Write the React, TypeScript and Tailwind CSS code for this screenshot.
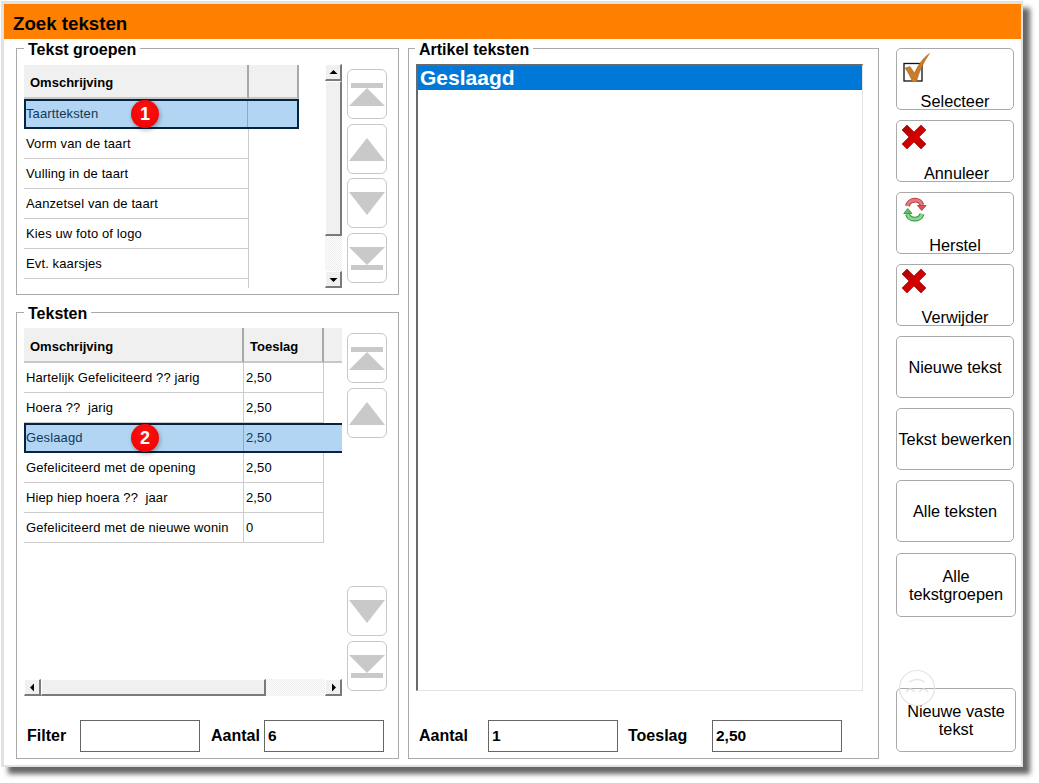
import React from "react";

const groupRows = ["Vorm van de taart", "Vulling in de taart", "Aanzetsel van de taart", "Kies uw foto of logo", "Evt. kaarsjes"];
const textRows: [string, string, boolean?][] = [
  ["Hartelijk Gefeliciteerd ?? jarig", "2,50"],
  ["Hoera ??  jarig", "2,50"],
  ["Geslaagd", "2,50", true],
  ["Gefeliciteerd met de opening", "2,50"],
  ["Hiep hiep hoera ??  jaar", "2,50"],
  ["Gefeliciteerd met de nieuwe wonin", "0"],
];

function Badge({ n }: { n: number }) {
  return (
    <div className="absolute left-[105px] top-[-1px] flex h-[28px] w-[28px] items-center justify-center rounded-full bg-[radial-gradient(circle_at_50%_35%,#ff1010,#ee0000)] text-[18px] font-bold tracking-normal text-white shadow-[1px_2px_4px_rgba(0,0,0,0.3)]">
      {n}
    </div>
  );
}

function Nav({ kind, className = "" }: { kind: "first" | "up" | "down" | "last"; className?: string }) {
  return (
    <div className={`h-[50px] w-[40px] rounded-[6px] border border-[#c8c8c8] bg-white ${className}`}>
      <svg width="38" height="48" viewBox="1 1 38 48" className="block fill-[#c9c9c9]">
        {kind === "first" && <path d="M4 14h32v5H4zM20 19L38 37H2z" />}
        {kind === "up" && <path d="M20 14L38 37H2z" />}
        {kind === "down" && <path d="M2 14H38L20 37z" />}
        {kind === "last" && <path d="M2 14H38L20 32zM4 32h32v5H4z" />}
      </svg>
    </div>
  );
}

function ScrollBtn({ dir }: { dir: "up" | "down" | "left" | "right" }) {
  const d = { up: "M4.5 10L8.5 6L12.5 10z", down: "M4.5 7L8.5 11L12.5 7z", left: "M10 4.5L6 8.5L10 12.5z", right: "M7 4.5L11 8.5L7 12.5z" }[dir];
  return (
    <div className="h-[17px] w-[17px] shrink-0 border-t border-l border-t-white border-l-white border-r-2 border-b-2 border-r-[#7a7a7a] border-b-[#7a7a7a] bg-[#f0f0f0]">
      <svg width="17" height="17" viewBox="0 0 17 17" className="-ml-px -mt-px block fill-black">
        <path d={d} />
      </svg>
    </div>
  );
}

function Legend({ children, className = "ml-[7px]" }: { children: React.ReactNode; className?: string }) {
  return <legend className={`translate-y-px px-1 text-[16px] leading-[17px] font-bold text-black ${className}`}>{children}</legend>;
}

function Label({ children, className }: { children: React.ReactNode; className: string }) {
  return <div className={`shrink-0 text-[16px] font-bold text-black ${className}`}>{children}</div>;
}

function Field({ value, className }: { value?: string; className: string }) {
  return (
    <div className={`flex h-[32px] shrink-0 items-center border border-[#666] bg-white pl-[3px] text-[15.5px] font-bold text-black ${className}`}>
      {value}
    </div>
  );
}

function Check() {
  return (
    <svg width="30" height="30" viewBox="0 0 30 30" className="block">
      <rect x="3" y="11.5" width="18" height="17.5" fill="#fff" stroke="#111" strokeWidth="1.3" />
      <path d="M4 16L9 14.5L13.5 21C17 13 22 6 28.5 1.5C23.5 9 18 19 15.5 30H11.5C9.5 25 7 20 4 16z" fill="#c97b2c" stroke="#a96320" strokeWidth="0.5" />
    </svg>
  );
}

function Cross() {
  return (
    <svg width="26" height="26" viewBox="0 0 26 26" className="block">
      <defs>
        <linearGradient id="crossFill" x1="0" y1="0" x2="1" y2="1">
          <stop offset="0" stopColor="#a80000" />
          <stop offset="0.5" stopColor="#d40000" />
          <stop offset="1" stopColor="#c00000" />
        </linearGradient>
      </defs>
      <path d="M1 6L6 1L13 8L20 1L25 6L18 13L25 20L20 25L13 18L6 25L1 20L8 13z" fill="url(#crossFill)" stroke="#8c0000" strokeWidth="0.6" />
    </svg>
  );
}

function Refresh() {
  return (
    <svg width="24" height="27" viewBox="0 0 24 27" className="block">
      <path d="M4.5 10A7.5 7 0 0 1 19 9" fill="none" stroke="#b53c3c" strokeWidth="4.8" />
      <path d="M4.5 10A7.5 7 0 0 1 19 9" fill="none" stroke="#e67a7a" strokeWidth="2.8" />
      <path d="M14.5 9.5H23L18.7 14.5z" fill="#d85555" stroke="#a83030" strokeWidth="0.8" />
      <path d="M19 18A7.5 7 0 0 1 4.5 18" fill="none" stroke="#2f9040" strokeWidth="4.8" />
      <path d="M19 18A7.5 7 0 0 1 4.5 18" fill="none" stroke="#85d88c" strokeWidth="2.8" />
      <path d="M0.7 17.5H9L4.8 12.5z" fill="#5fc068" stroke="#2f8a3e" strokeWidth="0.8" />
    </svg>
  );
}

function IconButton({ icon, label, textClass }: { icon: React.ReactNode; label: string; textClass: string }) {
  return (
    <div className="flex h-[62px] w-[118px] flex-col justify-between rounded-[5px] border border-[#aaa] bg-white text-[16.3px] leading-[18px] text-black">
      <div className="h-[30px] pt-[3px] pl-[4px]">{icon}</div>
      <div className={`-mb-px text-center ${textClass}`}>{label}</div>
    </div>
  );
}

function TextButton({ children, className = "h-[62px] w-[118px]" }: { children: React.ReactNode; className?: string }) {
  return (
    <div className={`flex items-center justify-center rounded-[5px] border border-[#aaa] bg-white text-center text-[16.3px] leading-[18px] text-black ${className}`}>
      {children}
    </div>
  );
}

function HeaderCell({ children, className }: { children?: React.ReactNode; className: string }) {
  return (
    <div className={`flex shrink-0 items-center border-r-2 border-b-2 border-r-[#a8a8a8] border-b-[#c8c8c8] bg-[#f0f0f0] pl-[6px] text-[13px] font-bold tracking-normal text-black ${className}`}>
      {children}
    </div>
  );
}

export default function App() {
  return (
    <div className="h-[783px] w-[1039px] overflow-hidden bg-white pt-px pl-px font-['Liberation_Sans',Arial,sans-serif]">
      <div className="h-[766px] w-[1022px] border-t-[3px] border-r-2 border-b-2 border-l-[3px] border-[#e2e2e2] bg-white shadow-[7px_7px_5px_rgba(0,0,0,0.6)]">
        <div className="flex h-[35px] items-center bg-[#ff8000] pt-[6px] pl-[9px] text-[18.7px] font-bold text-black">Zoek teksten</div>

        <div className="flex pl-[12px]">
          {/* Left column */}
          <div className="flex w-[383px] flex-col gap-[9px] pt-px">
            <fieldset className="h-[255px] w-[383px] border border-[#aaa]">
              <Legend>Tekst groepen</Legend>
              <div className="flex pt-[8px] pl-[7px]">
                <div className="w-[275px] text-[13px] tracking-[0.12px] whitespace-pre text-black">
                  <div className="flex">
                    <HeaderCell className="h-[34px] w-[225px] pt-[3px]">Omschrijving</HeaderCell>
                    <HeaderCell className="h-[34px] w-[50px]" />
                  </div>
                  <div className="relative flex h-[30px] items-center border-2 border-[#06233f] bg-[#b1d5f2] text-[#14375a]">
                    <div className="w-[222px] border-r border-r-[#8ba9c2] leading-[26px]">Taartteksten</div>
                    <Badge n={1} />
                  </div>
                  {groupRows.map((r) => (
                    <div key={r} className="flex h-[30px] w-[225px] items-center border-r border-b border-[#ccc] pl-[2px]">
                      {r}
                    </div>
                  ))}
                  <div className="h-[9px] w-[225px] border-r border-[#ccc]" />
                </div>
                <div className="-mt-px ml-[26px] flex h-[224px] w-[17px] flex-col">
                  <ScrollBtn dir="up" />
                  <div className="h-[155px] border-t border-l border-t-white border-l-white border-r-2 border-b-2 border-r-[#7a7a7a] border-b-[#7a7a7a] bg-[#f0f0f0]" />
                  <div className="flex-1 bg-[repeating-conic-gradient(#ececec_0_25%,#fff_0_50%)] bg-size-[2px_2px]" />
                  <ScrollBtn dir="down" />
                </div>
                <div className="ml-[5px] flex flex-col pt-[4px]">
                  <Nav kind="first" />
                  <Nav kind="up" className="mt-[5px]" />
                  <Nav kind="down" className="mt-[4px]" />
                  <Nav kind="last" className="mt-[5px]" />
                </div>
              </div>
            </fieldset>

            <fieldset className="h-[455px] w-[383px] border border-[#aaa]">
              <Legend>Teksten</Legend>
              <div className="flex pt-[7px] pl-[7px]">
                <div className="flex w-[318px] flex-col">
                  <div className="h-[351px] text-[13px] tracking-[0.12px] whitespace-pre text-black">
                    <div className="flex">
                      <HeaderCell className="h-[35px] w-[220px] pt-[4px]">Omschrijving</HeaderCell>
                      <HeaderCell className="h-[35px] w-[80px] pt-[4px]">Toeslag</HeaderCell>
                      <div className="h-[35px] w-[18px] border-b-2 border-b-[#c8c8c8] bg-[#f0f0f0]" />
                    </div>
                    {textRows.map(([t, v, sel]) =>
                      sel ? (
                        <div key={t} className="relative flex h-[30px] items-center border-y-2 border-l-2 border-[#06233f] bg-[#b1d5f2] text-[#14375a]">
                          <div className="w-[218px] border-r border-r-[#8ba9c2] leading-[26px]">{t}</div>
                          <div className="pl-[2px]">{v}</div>
                          <Badge n={2} />
                        </div>
                      ) : (
                        <div key={t} className="flex h-[30px] w-[300px] items-center border-b border-[#ccc]">
                          <div className="w-[220px] border-r border-[#ccc] pl-[2px] leading-[29px]">{t}</div>
                          <div className="w-[80px] border-r border-[#ccc] pl-[2px] leading-[29px]">{v}</div>
                        </div>
                      ),
                    )}
                  </div>
                  <div className="flex h-[17px]">
                    <ScrollBtn dir="left" />
                    <div className="w-[225px] border-t border-l border-t-white border-l-white border-r-2 border-b-2 border-r-[#7a7a7a] border-b-[#7a7a7a] bg-[#f0f0f0]" />
                    <div className="flex-1 bg-[repeating-conic-gradient(#ececec_0_25%,#fff_0_50%)] bg-size-[2px_2px]" />
                    <ScrollBtn dir="right" />
                  </div>
                </div>
                <div className="ml-[5px] flex flex-col pt-[5px]">
                  <Nav kind="first" />
                  <Nav kind="up" className="mt-[5px]" />
                  <Nav kind="down" className="mt-[148px]" />
                  <Nav kind="last" className="mt-[5px]" />
                </div>
              </div>
              <div className="mt-[24px] flex items-center pl-[10px]">
                <Label className="w-[53px]">Filter</Label>
                <Field className="w-[120px]" />
                <Label className="ml-[11px] w-[53px]">Aantal</Label>
                <Field value="6" className="w-[120px]" />
              </div>
            </fieldset>
          </div>

          {/* Middle column */}
          <fieldset className="mt-px ml-[9px] h-[719px] w-[471px] border border-[#aaa]">
            <Legend className="ml-[6px]">Artikel teksten</Legend>
            <div className="mt-[7px] ml-[7px] h-[627px] w-[447px] border-t-2 border-r border-b border-l-2 border-t-[#696969] border-r-[#e4e4e4] border-b-[#e4e4e4] border-l-[#696969] bg-white">
              <div className="h-[24px] bg-[#0078d7] pl-[2px] text-[21px] leading-[24px] font-bold text-white">Geslaagd</div>
            </div>
            <div className="mt-[29px] flex items-center pl-[10px]">
              <Label className="w-[69px]">Aantal</Label>
              <Field value="1" className="w-[130px]" />
              <Label className="ml-[10px] w-[84px]">Toeslag</Label>
              <Field value="2,50" className="w-[130px]" />
            </div>
          </fieldset>

          {/* Right column */}
          <div className="ml-[17px] flex flex-col pt-[9px]">
            <div className="flex flex-col gap-[10px]">
              <IconButton icon={<Check />} label="Selecteer" textClass="" />
              <IconButton icon={<Cross />} label="Annuleer" textClass="pl-[3px]" />
              <IconButton icon={<div className="pl-[2px]"><Refresh /></div>} label="Herstel" textClass="" />
              <IconButton icon={<Cross />} label="Verwijder" textClass="" />
              <TextButton>Nieuwe tekst</TextButton>
              <TextButton>Tekst bewerken</TextButton>
              <TextButton>Alle teksten</TextButton>
            </div>
            <TextButton className="mt-[11px] h-[64px] w-[120px]">
              Alle
              <br />
              tekstgroepen
            </TextButton>
            <div className="relative mt-[71px]">
              <TextButton className="h-[64px] w-[120px]">
                Nieuwe vaste
                <br />
                tekst
              </TextButton>
              <svg width="38" height="38" viewBox="0 0 38 38" className="pointer-events-none absolute -top-[19px] left-[2px] fill-none stroke-[#e4e4e4]">
                <circle cx="19" cy="19" r="17.5" strokeWidth="1.2" />
                <path d="M11 13Q19 8 27 13M8 23Q12 17 17 23M21 23Q26 17 30 23" strokeWidth="1.4" />
              </svg>
            </div>
          </div>
        </div>
      </div>
    </div>
  );
}
